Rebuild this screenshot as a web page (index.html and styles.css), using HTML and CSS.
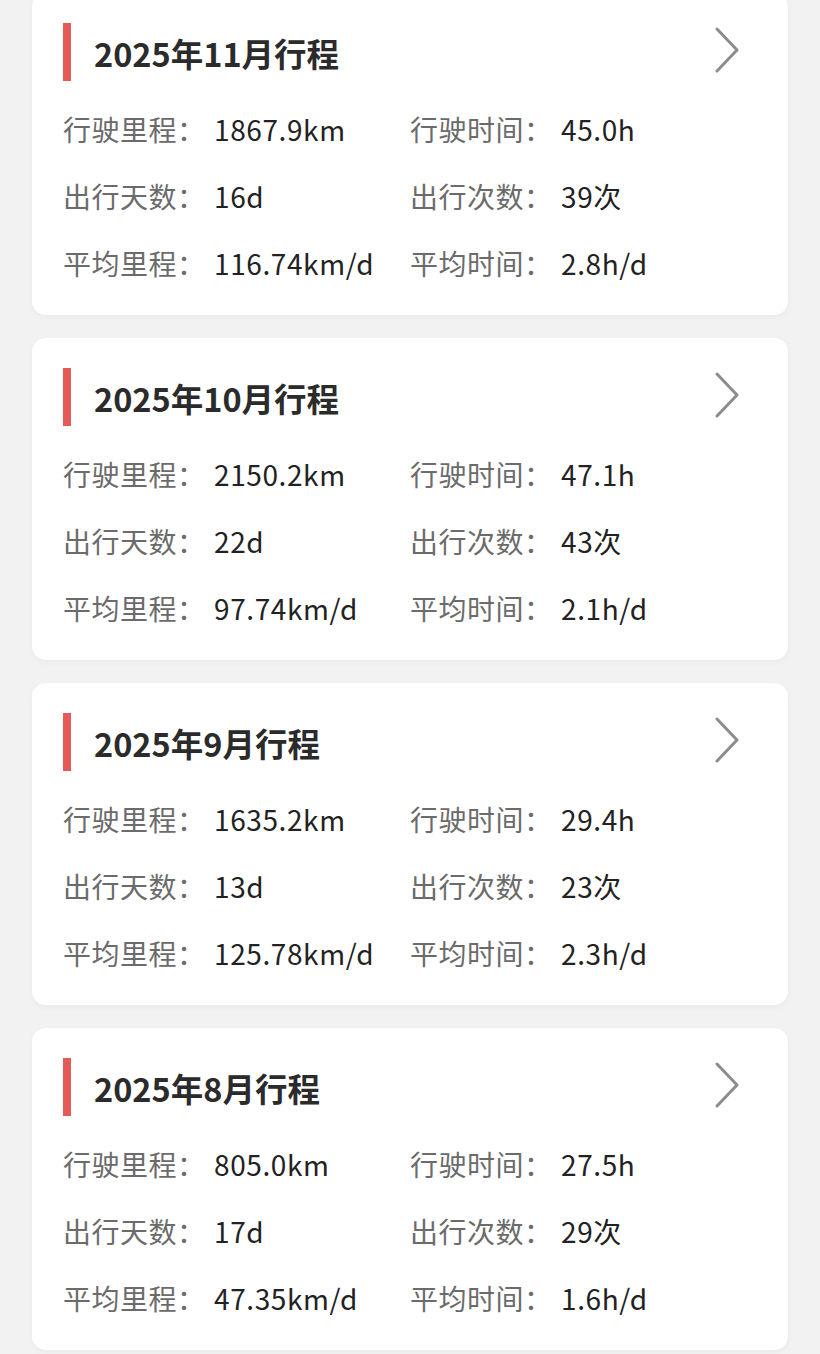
FILE: index.html
```html
<!DOCTYPE html>
<html lang="zh-CN">
<head>
    <meta charset="UTF-8">
    <meta name="viewport" content="width=device-width, initial-scale=1.0">
    <title>行程统计</title>
    <link rel="stylesheet" href="styles.css">
</head>
<body>
    <div class="trip-list">
        <div class="trip-card">
            <div class="trip-head">
                <span class="mark"></span>
                <h2 class="trip-title">2025年11月行程</h2>
                <svg class="arrow" viewBox="0 0 26 46" width="26" height="46"><path d="M3 2 L23 23 L3 44" fill="none" stroke="#8c8c8c" stroke-width="3" stroke-linecap="round" stroke-linejoin="round"/></svg>
            </div>
            <div class="stats">
                <div class="stat"><span class="label">行驶里程：</span><span class="value">1867.9km</span></div>
                <div class="stat"><span class="label">行驶时间：</span><span class="value">45.0h</span></div>
                <div class="stat"><span class="label">出行天数：</span><span class="value">16d</span></div>
                <div class="stat"><span class="label">出行次数：</span><span class="value">39次</span></div>
                <div class="stat"><span class="label">平均里程：</span><span class="value">116.74km/d</span></div>
                <div class="stat"><span class="label">平均时间：</span><span class="value">2.8h/d</span></div>
            </div>
        </div>

        <div class="trip-card">
            <div class="trip-head">
                <span class="mark"></span>
                <h2 class="trip-title">2025年10月行程</h2>
                <svg class="arrow" viewBox="0 0 26 46" width="26" height="46"><path d="M3 2 L23 23 L3 44" fill="none" stroke="#8c8c8c" stroke-width="3" stroke-linecap="round" stroke-linejoin="round"/></svg>
            </div>
            <div class="stats">
                <div class="stat"><span class="label">行驶里程：</span><span class="value">2150.2km</span></div>
                <div class="stat"><span class="label">行驶时间：</span><span class="value">47.1h</span></div>
                <div class="stat"><span class="label">出行天数：</span><span class="value">22d</span></div>
                <div class="stat"><span class="label">出行次数：</span><span class="value">43次</span></div>
                <div class="stat"><span class="label">平均里程：</span><span class="value">97.74km/d</span></div>
                <div class="stat"><span class="label">平均时间：</span><span class="value">2.1h/d</span></div>
            </div>
        </div>

        <div class="trip-card">
            <div class="trip-head">
                <span class="mark"></span>
                <h2 class="trip-title">2025年9月行程</h2>
                <svg class="arrow" viewBox="0 0 26 46" width="26" height="46"><path d="M3 2 L23 23 L3 44" fill="none" stroke="#8c8c8c" stroke-width="3" stroke-linecap="round" stroke-linejoin="round"/></svg>
            </div>
            <div class="stats">
                <div class="stat"><span class="label">行驶里程：</span><span class="value">1635.2km</span></div>
                <div class="stat"><span class="label">行驶时间：</span><span class="value">29.4h</span></div>
                <div class="stat"><span class="label">出行天数：</span><span class="value">13d</span></div>
                <div class="stat"><span class="label">出行次数：</span><span class="value">23次</span></div>
                <div class="stat"><span class="label">平均里程：</span><span class="value">125.78km/d</span></div>
                <div class="stat"><span class="label">平均时间：</span><span class="value">2.3h/d</span></div>
            </div>
        </div>

        <div class="trip-card">
            <div class="trip-head">
                <span class="mark"></span>
                <h2 class="trip-title">2025年8月行程</h2>
                <svg class="arrow" viewBox="0 0 26 46" width="26" height="46"><path d="M3 2 L23 23 L3 44" fill="none" stroke="#8c8c8c" stroke-width="3" stroke-linecap="round" stroke-linejoin="round"/></svg>
            </div>
            <div class="stats">
                <div class="stat"><span class="label">行驶里程：</span><span class="value">805.0km</span></div>
                <div class="stat"><span class="label">行驶时间：</span><span class="value">27.5h</span></div>
                <div class="stat"><span class="label">出行天数：</span><span class="value">17d</span></div>
                <div class="stat"><span class="label">出行次数：</span><span class="value">29次</span></div>
                <div class="stat"><span class="label">平均里程：</span><span class="value">47.35km/d</span></div>
                <div class="stat"><span class="label">平均时间：</span><span class="value">1.6h/d</span></div>
            </div>
        </div>
    </div>
</body>
</html>
```

FILE: styles.css
```css
body {
    margin: 0;
    background-color: #f2f2f2;
    font-family: "Noto Sans CJK SC", "Noto Sans", sans-serif;
    color: #333;
}
.trip-list {
    display: flex;
    flex-direction: column;
    gap: 23px;
    padding: 0 32px 20px;
    margin-top: -7px;
}
.trip-card {
    background-color: #fff;
    border-radius: 14px;
    box-shadow: 0 2px 6px rgba(0, 0, 0, 0.04);
    padding: 30px 48px 19px 31px;
}
.trip-head {
    display: flex;
    align-items: center;
    height: 58px;
}
.mark {
    width: 8px;
    height: 58px;
    background-color: #e35a57;
    margin-right: 23px;
}
.trip-title {
    flex: 1;
    margin: 0;
    font-size: 32.5px;
    font-weight: 700;
    color: #2b2b2b;
}
.arrow {
    display: block;
    margin-top: -4px;
}
.stats {
    display: grid;
    grid-template-columns: 347px 1fr;
    margin-top: 14px;
}
.stat {
    display: flex;
    align-items: center;
    height: 67px;
    font-size: 28px;
    white-space: nowrap;
}
.label {
    width: 151px;
    flex-shrink: 0;
    color: #6b6b6b;
    letter-spacing: 0.5px;
}
.value {
    color: #222;
    font-weight: 400;
    letter-spacing: 0.6px;
}
```
